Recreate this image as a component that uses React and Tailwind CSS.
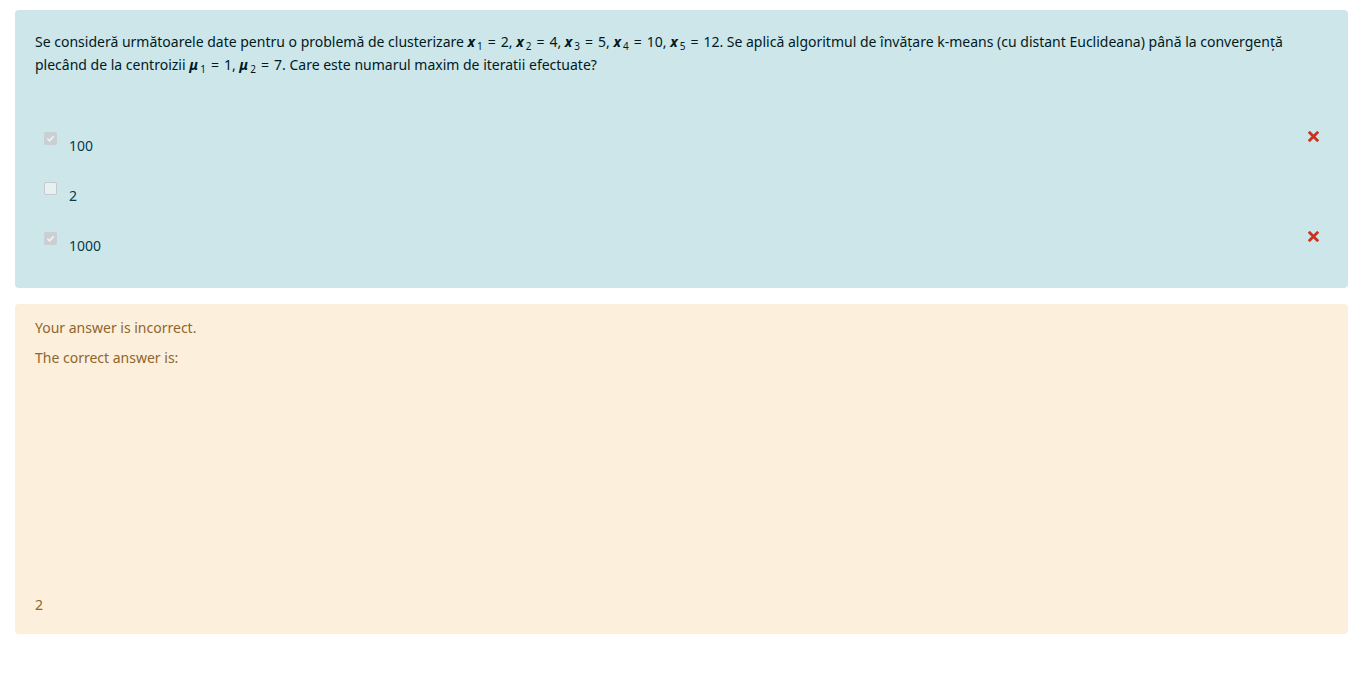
const font = { fontFamily: '"Noto Sans", "Open Sans", sans-serif' };

function Var({ name, sub }) {
  return (
    <span className="inline-block whitespace-nowrap">
      <b className="italic font-bold">{name}</b>
      <span className="relative top-[3px] ml-[2px] text-[10px] leading-none">{sub}</span>
    </span>
  );
}

function Eq() {
  return <span className="mx-[5px]">=</span>;
}

const answers = [
  { label: '100', checked: true, wrong: true },
  { label: '2', checked: false, wrong: false },
  { label: '1000', checked: true, wrong: true }
];

function Box({ checked }) {
  return checked ? (
    <span className="grid h-[13px] w-[13px] shrink-0 place-items-center rounded-[2px] bg-[#c9cfd2]">
      <svg width="9" height="9" viewBox="0 0 10 10"><path d="M1.5 5.2 4 7.5 8.6 2.4" fill="none" stroke="#eef2f3" strokeWidth="1.8" /></svg>
    </span>
  ) : (
    <span className="block h-[13px] w-[13px] shrink-0 rounded-[2px] border border-[#c3cbce] bg-[#e9f0f2]" />
  );
}

function Cross() {
  return (
    <svg width="11" height="11" viewBox="0 0 11 11">
      <path d="M1.8 1.8 9.2 9.2M9.2 1.8 1.8 9.2" stroke="#ca3120" strokeWidth="2.8" strokeLinecap="square" />
    </svg>
  );
}

export default function App() {
  return (
    <div className="bg-white px-[15px] pt-[10px] pb-[62px] text-[14px] text-[#001a1e]" style={font}>
      <div className="rounded-[4px] bg-[#cde6ea] px-5 pt-[20px] pb-[33px]">
        <p className="leading-[23px]">
          Se consideră următoarele date pentru o problemă de clusterizare <Var name="x" sub="1" /><Eq />2, <Var name="x" sub="2" /><Eq />4, <Var name="x" sub="3" /><Eq />5, <Var name="x" sub="4" /><Eq />10, <Var name="x" sub="5" /><Eq />12. Se aplică algoritmul de învățare k-means (cu distant Euclideana) până la convergență plecând de la centroizii <Var name="μ" sub="1" /><Eq />1, <Var name="μ" sub="2" /><Eq />7. Care este numarul maxim de iteratii efectuate?
        </p>
        <div className="mt-[56px] flex flex-col gap-[27px] pl-[9px] pr-[9px]">
          {answers.map((a) => (
            <div key={a.label} className="flex items-start">
              <Box checked={a.checked} />
              <span className="ml-[12px] mt-[5px] leading-[18px] text-[#0a3a48]">{a.label}</span>
              <span className="ml-auto -mt-[1px]">{a.wrong && <Cross />}</span>
            </div>
          ))}
        </div>
      </div>
      <div className="mt-[16px] flex h-[330px] flex-col rounded-[4px] bg-[#fcefdc] px-5 pt-[13px] pb-[18px] text-[#8e662e]">
        <p className="leading-[22px]">Your answer is incorrect.</p>
        <p className="mt-[8px] leading-[22px]">The correct answer is:</p>
        <p className="mt-auto leading-[22px]">2</p>
      </div>
    </div>
  );
}
